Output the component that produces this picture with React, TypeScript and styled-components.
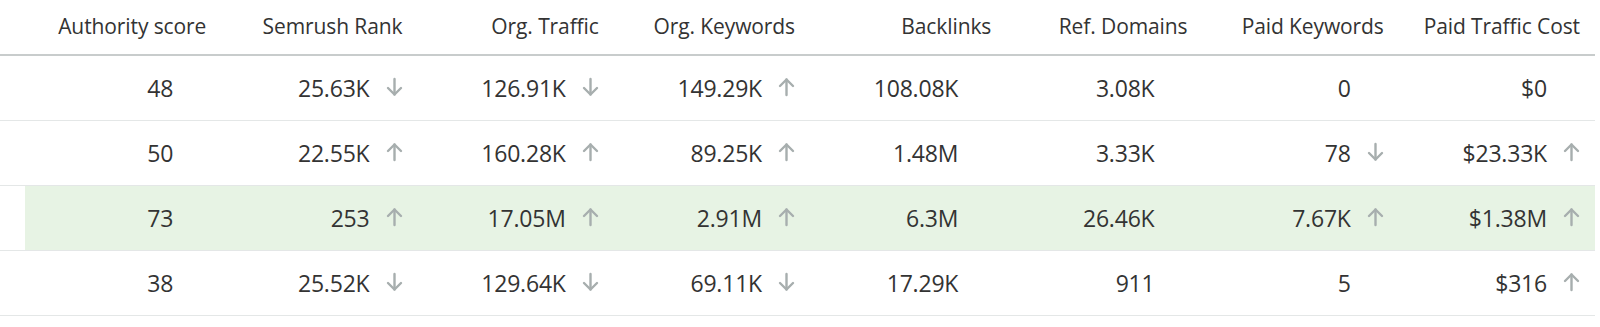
import styled, { createGlobalStyle } from 'styled-components';
import { FC } from 'react';

type Trend = 'up' | 'down' | null;
type Cell = { value: string; trend?: Trend };

const columns = [
  'Authority score',
  'Semrush Rank',
  'Org. Traffic',
  'Org. Keywords',
  'Backlinks',
  'Ref. Domains',
  'Paid Keywords',
  'Paid Traffic Cost',
];

const rows: { highlighted?: boolean; cells: Cell[] }[] = [
  {
    cells: [
      { value: '48' },
      { value: '25.63K', trend: 'down' },
      { value: '126.91K', trend: 'down' },
      { value: '149.29K', trend: 'up' },
      { value: '108.08K' },
      { value: '3.08K' },
      { value: '0' },
      { value: '$0' },
    ],
  },
  {
    cells: [
      { value: '50' },
      { value: '22.55K', trend: 'up' },
      { value: '160.28K', trend: 'up' },
      { value: '89.25K', trend: 'up' },
      { value: '1.48M' },
      { value: '3.33K' },
      { value: '78', trend: 'down' },
      { value: '$23.33K', trend: 'up' },
    ],
  },
  {
    highlighted: true,
    cells: [
      { value: '73' },
      { value: '253', trend: 'up' },
      { value: '17.05M', trend: 'up' },
      { value: '2.91M', trend: 'up' },
      { value: '6.3M' },
      { value: '26.46K' },
      { value: '7.67K', trend: 'up' },
      { value: '$1.38M', trend: 'up' },
    ],
  },
  {
    cells: [
      { value: '38' },
      { value: '25.52K', trend: 'down' },
      { value: '129.64K', trend: 'down' },
      { value: '69.11K', trend: 'down' },
      { value: '17.29K' },
      { value: '911' },
      { value: '5' },
      { value: '$316', trend: 'up' },
    ],
  },
];

const GlobalStyle = createGlobalStyle`
  html, body {
    margin: 0;
    padding: 0;
    background: #ffffff;
  }
  body {
    font-family: 'Open Sans', 'Noto Sans', sans-serif;
    color: #333333;
  }
`;

const Table = styled.table`
  width: 1595px;
  border-collapse: collapse;
  table-layout: fixed;
`;

const SpacerCol = styled.col`
  width: 25px;
`;

const HeadCell = styled.th`
  height: 52px;
  padding: 0 15px 2px 0;
  text-align: right;
  font-weight: 400;
  font-size: 21px;
  letter-spacing: -0.1px;
  color: #333333;
  white-space: nowrap;
  border-bottom: 2px solid #c8cccc;
`;

const Row = styled.tr`
  border-bottom: 1px solid #e4e7e7;
`;

const BodyCell = styled.td<{ $highlighted?: boolean }>`
  height: 64px;
  padding: 0 15px 0 0;
  text-align: right;
  font-size: 23px;
  letter-spacing: -0.2px;
  white-space: nowrap;
  background: ${(p) => (p.$highlighted ? '#e7f3e4' : 'transparent')};
`;

const Spacer = styled.td`
  padding: 0;
`;

const Value = styled.div`
  display: inline-flex;
  align-items: center;
  justify-content: flex-end;
`;

const TrendSlot = styled.span`
  display: inline-flex;
  align-items: center;
  justify-content: flex-end;
  width: 33px;
  padding-bottom: 2px;
  color: #a7aeae;
`;

const TrendIcon: FC<{ trend?: Trend }> = ({ trend }) => (
  <TrendSlot>
    {trend && (
      <svg width="17" height="20" viewBox="0 0 17 20" fill="none" stroke="currentColor" strokeWidth="2.4" strokeLinecap="round" strokeLinejoin="round">
        {trend === 'up' ? (
          <>
            <path d="M8.5 18V2.5" />
            <path d="M2 9L8.5 2.5L15 9" />
          </>
        ) : (
          <>
            <path d="M8.5 2V17.5" />
            <path d="M2 11L8.5 17.5L15 11" />
          </>
        )}
      </svg>
    )}
  </TrendSlot>
);

export default function App() {
  return (
    <>
      <GlobalStyle />
      <Table>
        <colgroup>
          <SpacerCol />
          {columns.map((c) => (
            <col key={c} />
          ))}
        </colgroup>
        <thead>
          <tr>
            <HeadCell />
            {columns.map((c) => (
              <HeadCell key={c}>{c}</HeadCell>
            ))}
          </tr>
        </thead>
        <tbody>
          {rows.map((row, i) => (
            <Row key={i}>
              <Spacer />
              {row.cells.map((cell, j) => (
                <BodyCell key={j} $highlighted={row.highlighted}>
                  <Value>
                    {cell.value}
                    <TrendIcon trend={cell.trend} />
                  </Value>
                </BodyCell>
              ))}
            </Row>
          ))}
        </tbody>
      </Table>
    </>
  );
}
